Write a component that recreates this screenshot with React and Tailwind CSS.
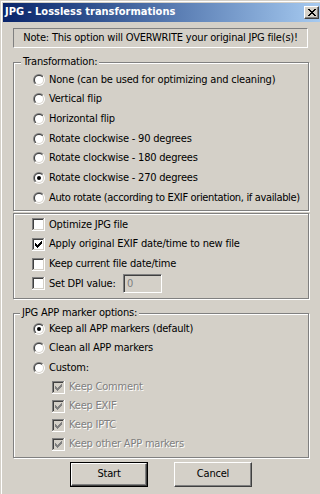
import React, { useId } from "react";

function Radio({ checked }) {
  const id = useId().replace(/:/g, "");
  return (
    <svg width="12" height="12" viewBox="0 0 12 12" className="shrink-0 block">
      <defs>
        <linearGradient id={`o${id}`} x1="0" y1="0" x2="1" y2="1">
          <stop offset="0.5" stopColor="#808080" />
          <stop offset="0.5" stopColor="#ffffff" />
        </linearGradient>
        <linearGradient id={`i${id}`} x1="0" y1="0" x2="1" y2="1">
          <stop offset="0.5" stopColor="#404040" />
          <stop offset="0.5" stopColor="#d4d0c8" />
        </linearGradient>
      </defs>
      <circle cx="6" cy="6" r="6" fill={`url(#o${id})`} />
      <circle cx="6" cy="6" r="5" fill={`url(#i${id})`} />
      <circle cx="6" cy="6" r="4" fill="#ffffff" />
      {checked && <circle cx="6" cy="6" r="2" fill="#000000" />}
    </svg>
  );
}

const checkCols = [
  [3, 5],
  [4, 6],
  [5, 7],
  [6, 6],
  [7, 5],
  [8, 4],
  [9, 3],
];

function Check({ checked, disabled }) {
  return (
    <svg width="13" height="13" viewBox="0 0 13 13" className="shrink-0 block" shapeRendering="crispEdges">
      <rect x="0" y="0" width="13" height="13" fill="#ffffff" />
      <rect x="0" y="0" width="12" height="1" fill="#808080" />
      <rect x="0" y="0" width="1" height="12" fill="#808080" />
      <rect x="1" y="1" width="11" height="11" fill="#d4d0c8" />
      <rect x="1" y="1" width="10" height="1" fill="#404040" />
      <rect x="1" y="1" width="1" height="10" fill="#404040" />
      <rect x="2" y="2" width="9" height="9" fill={disabled ? "#d4d0c8" : "#ffffff"} />
      {checked &&
        checkCols.map(([x, y]) => (
          <rect key={x} x={x} y={y} width="1" height="3" fill={disabled ? "#808080" : "#000000"} />
        ))}
    </svg>
  );
}

function RadioRow({ label, checked, h = "h-[19.67px]", tight = false }) {
  return (
    <div className={`flex items-center ${h}`}>
      <div className="ml-[19px]">
        <Radio checked={checked} />
      </div>
      <span className={`ml-[4px] whitespace-nowrap ${tight ? "tracking-[-0.35px]" : ""}`}>{label}</span>
    </div>
  );
}

function CheckRow({ label, checked }) {
  return (
    <div className="flex items-center h-[19.67px]">
      <div className="ml-[18px]">
        <Check checked={checked} />
      </div>
      <span className="ml-[4px] whitespace-nowrap">{label}</span>
    </div>
  );
}

function DisabledCheckRow({ label }) {
  return (
    <div className="flex items-center h-[19px]">
      <div className="ml-[38px]">
        <Check checked disabled />
      </div>
      <span className="ml-[4px] whitespace-nowrap text-[#808080] [text-shadow:1px_1px_0_#ffffff]">{label}</span>
    </div>
  );
}

const groupCls =
  "relative ml-[10px] w-[296px] border border-[#808080] [box-shadow:inset_1px_1px_0_#ffffff,1px_1px_0_#ffffff]";

function Button({ children, isDefault }) {
  return (
    <div className={`w-[78px] h-[25px] ${isDefault ? "border border-black" : ""}`}>
      <div className="w-full h-full border-t border-l border-white border-b border-r border-b-[#404040] border-r-[#404040] [box-shadow:inset_-1px_-1px_0_#808080] flex items-center justify-center">
        {children}
      </div>
    </div>
  );
}

export default function App() {
  return (
    <div className="w-[320px] h-[494px] overflow-hidden bg-[#d4d0c8] border-t border-l border-[#d4d0c8] text-[11px] tracking-[-0.2px] text-black font-['DejaVu_Sans_Condensed','DejaVu_Sans',sans-serif]">
      <div className="h-full border-t border-l border-white pt-[1px] pl-[1px]">
        {/* Title bar */}
        <div className="h-[19px] flex items-center justify-between bg-gradient-to-r from-[#0a246a] to-[#a6caf0]">
          <span className="ml-[2px] text-white font-bold text-[11px] tracking-normal whitespace-nowrap">
            JPG - Lossless transformations
          </span>
          <div className="mr-[1px] w-[15px] h-[13px] bg-[#d4d0c8] border-t border-l border-white border-b border-r border-b-[#404040] border-r-[#404040] [box-shadow:inset_-1px_-1px_0_#808080] flex items-center justify-center">
            <svg width="8" height="7" viewBox="0 0 8 7" shapeRendering="crispEdges">
              <path d="M0 0h2v1h-2zM6 0h2v1h-2zM1 1h2v1h-2zM5 1h2v1h-2zM2 2h4v1h-4zM3 3h2v1h-2zM2 4h4v1h-4zM1 5h2v1h-2zM5 5h2v1h-2zM0 6h2v1h-2zM6 6h2v1h-2z" fill="#000" />
            </svg>
          </div>
        </div>

        {/* Note */}
        <div className="mt-[6px] ml-[10px] w-[295px] h-[20px] border-t border-l border-[#808080] border-b border-r border-b-white border-r-white flex items-center justify-center whitespace-nowrap">
          Note: This option will OVERWRITE your original JPG file(s)!
        </div>

        {/* Transformation group */}
        <div className={`${groupCls} mt-[14px] h-[149px] pt-[7px]`}>
          <span className="absolute left-[7px] -top-[8px] px-[2px] h-[14px] leading-[14px] bg-[#d4d0c8] whitespace-nowrap">
            Transformation:
          </span>
          <RadioRow label="None (can be used for optimizing and cleaning)" />
          <RadioRow label="Vertical flip" />
          <RadioRow label="Horizontal flip" />
          <RadioRow label="Rotate clockwise - 90 degrees" />
          <RadioRow label="Rotate clockwise - 180 degrees" />
          <RadioRow label="Rotate clockwise - 270 degrees" checked />
          <RadioRow label="Auto rotate (according to EXIF orientation, if available)" tight />
        </div>

        {/* Options group */}
        <div className={`${groupCls} mt-[2px] h-[86px] pt-[1px]`}>
          <CheckRow label="Optimize JPG file" />
          <CheckRow label="Apply original EXIF date/time to new file" checked />
          <CheckRow label="Keep current file date/time" />
          <div className="flex items-center h-[19.67px]">
            <div className="ml-[18px]">
              <Check />
            </div>
            <span className="ml-[4px] w-[74px] whitespace-nowrap">Set DPI value:</span>
            <div className="w-[39px] h-[19px] border-t border-l border-[#808080] border-b border-r border-b-white border-r-white [box-shadow:inset_1px_1px_0_#404040,inset_-1px_-1px_0_#d4d0c8] flex items-center pl-[3px] text-[#808080]">
              0
            </div>
          </div>
        </div>

        {/* APP markers group */}
        <div className={`${groupCls} mt-[14px] h-[145px] pt-[5px]`}>
          <span className="absolute left-[6px] -top-[8px] px-[2px] h-[14px] leading-[14px] bg-[#d4d0c8] whitespace-nowrap">
            JPG APP marker options:
          </span>
          <RadioRow label="Keep all APP markers (default)" checked h="h-[19.5px]" />
          <RadioRow label="Clean all APP markers" h="h-[19.5px]" />
          <RadioRow label="Custom:" h="h-[19.5px]" />
          <DisabledCheckRow label="Keep Comment" />
          <DisabledCheckRow label="Keep EXIF" />
          <DisabledCheckRow label="Keep IPTC" />
          <DisabledCheckRow label="Keep other APP markers" />
        </div>

        {/* Buttons */}
        <div className="flex mt-[4px] ml-[67px] gap-[26px]">
          <Button isDefault>Start</Button>
          <Button>Cancel</Button>
        </div>
      </div>
    </div>
  );
}
